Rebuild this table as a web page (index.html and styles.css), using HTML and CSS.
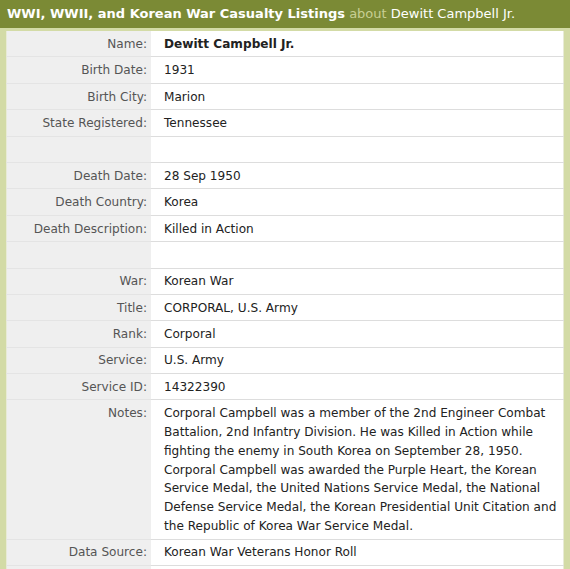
FILE: index.html
```html
<!DOCTYPE html>
<html>
<head>
<meta charset="utf-8">
<link rel="stylesheet" href="styles.css">
</head>
<body>
<div class="panel">
  <div class="head"><b>WWI, WWII, and Korean War Casualty Listings</b> <span class="about">about</span> Dewitt Campbell Jr.</div>
  <div class="body">
    <table class="rec">
      <tr><th>Name:</th><td><b>Dewitt Campbell Jr.</b></td></tr>
      <tr><th>Birth Date:</th><td>1931</td></tr>
      <tr><th>Birth City:</th><td>Marion</td></tr>
      <tr><th>State Registered:</th><td>Tennessee</td></tr>
      <tr><th>&nbsp;</th><td>&nbsp;</td></tr>
      <tr><th>Death Date:</th><td>28 Sep 1950</td></tr>
      <tr><th>Death Country:</th><td>Korea</td></tr>
      <tr><th>Death Description:</th><td>Killed in Action</td></tr>
      <tr><th>&nbsp;</th><td>&nbsp;</td></tr>
      <tr><th>War:</th><td>Korean War</td></tr>
      <tr><th>Title:</th><td>CORPORAL, U.S. Army</td></tr>
      <tr><th>Rank:</th><td>Corporal</td></tr>
      <tr><th>Service:</th><td>U.S. Army</td></tr>
      <tr><th>Service ID:</th><td>14322390</td></tr>
      <tr><th>Notes:</th><td>Corporal Campbell was a member of the 2nd Engineer Combat Battalion, 2nd Infantry Division. He was Killed in Action while fighting the enemy in South Korea on September 28, 1950. Corporal Campbell was awarded the Purple Heart, the Korean Service Medal, the United Nations Service Medal, the National Defense Service Medal, the Korean Presidential Unit Citation and the Republic of Korea War Service Medal.</td></tr>
      <tr><th>Data Source:</th><td>Korean War Veterans Honor Roll</td></tr>
      <tr><th>&nbsp;</th><td>&nbsp;</td></tr>
    </table>
  </div>
</div>
</body>
</html>
```
FILE: styles.css
```css
html, body {
  margin: 0;
  padding: 0;
  background: #ffffff;
}
.panel {
  width: 570px;
  font-family: "DejaVu Sans", Verdana, sans-serif;
}
.head {
  background: #7b8a35;
  color: #ffffff;
  font-size: 13px;
  line-height: 28px;
  height: 28px;
  padding-left: 7px;
  white-space: nowrap;
  overflow: hidden;
}
.head b {
  font-weight: bold;
}
.about {
  color: #c8cf93;
}
.body {
  background: #d3dba6;
  padding: 3px 6px 0 6px;
}
.rec {
  width: 100%;
  border-collapse: collapse;
  font-size: 12.1px;
  line-height: 18.8px;
  border-left: 1px solid #e8ebd6;
  border-right: 1px solid #e8ebd6;
}
.rec th {
  width: 140px;
  background: #efefef;
  color: #555555;
  font-weight: normal;
  text-align: right;
  vertical-align: top;
  padding: 3.8px 4px 2.8px 0;
  border-bottom: 1px solid #e4e4e4;
  white-space: nowrap;
}
.rec td {
  background: #ffffff;
  color: #222222;
  vertical-align: top;
  padding: 3.8px 2px 2.8px 13px;
  border-bottom: 1px solid #dddddd;
}
```
